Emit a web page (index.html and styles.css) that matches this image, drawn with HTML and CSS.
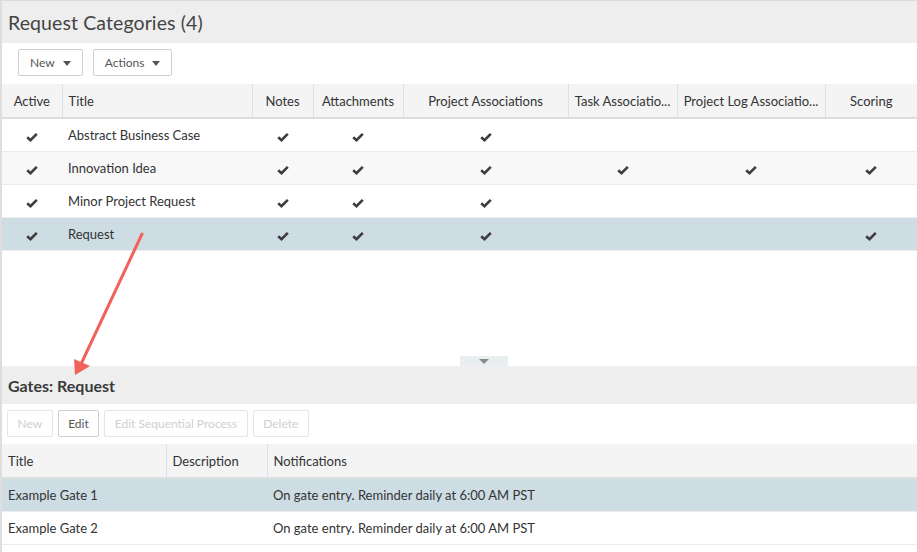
FILE: index.html
```html
<!DOCTYPE html>
<html>
<head>
<meta charset="utf-8">
<link rel="stylesheet" href="styles.css">
</head>
<body>
<div class="page">
  <section class="panel top">
    <div class="band"><h1 class="title">Request Categories (4)</h1></div>
    <div class="toolbar">
      <button class="btn drop">New <span class="caret"></span></button>
      <button class="btn drop">Actions <span class="caret"></span></button>
    </div>
    <table class="grid">
      <colgroup>
        <col style="width:60px"><col style="width:190px"><col style="width:61px"><col style="width:90px">
        <col style="width:165px"><col style="width:109px"><col style="width:148px"><col style="width:92px">
      </colgroup>
      <thead>
        <tr>
          <th class="c">Active</th><th>Title</th><th class="c">Notes</th><th class="c">Attachments</th>
          <th class="c">Project Associations</th><th class="c">Task Associatio...</th><th class="c">Project Log Associatio...</th><th class="c">Scoring</th>
        </tr>
      </thead>
      <tbody>
        <tr>
          <td class="c"><svg class="ck" viewBox="0 0 12 10"><path d="M1.2 5.2 4.5 8.2 10.8 1.8"/></svg></td>
          <td>Abstract Business Case</td>
          <td class="c"><svg class="ck" viewBox="0 0 12 10"><path d="M1.2 5.2 4.5 8.2 10.8 1.8"/></svg></td>
          <td class="c"><svg class="ck" viewBox="0 0 12 10"><path d="M1.2 5.2 4.5 8.2 10.8 1.8"/></svg></td>
          <td class="c"><svg class="ck" viewBox="0 0 12 10"><path d="M1.2 5.2 4.5 8.2 10.8 1.8"/></svg></td>
          <td></td><td></td><td></td>
        </tr>
        <tr class="alt">
          <td class="c"><svg class="ck" viewBox="0 0 12 10"><path d="M1.2 5.2 4.5 8.2 10.8 1.8"/></svg></td>
          <td>Innovation Idea</td>
          <td class="c"><svg class="ck" viewBox="0 0 12 10"><path d="M1.2 5.2 4.5 8.2 10.8 1.8"/></svg></td>
          <td class="c"><svg class="ck" viewBox="0 0 12 10"><path d="M1.2 5.2 4.5 8.2 10.8 1.8"/></svg></td>
          <td class="c"><svg class="ck" viewBox="0 0 12 10"><path d="M1.2 5.2 4.5 8.2 10.8 1.8"/></svg></td>
          <td class="c"><svg class="ck" viewBox="0 0 12 10"><path d="M1.2 5.2 4.5 8.2 10.8 1.8"/></svg></td>
          <td class="c"><svg class="ck" viewBox="0 0 12 10"><path d="M1.2 5.2 4.5 8.2 10.8 1.8"/></svg></td>
          <td class="c"><svg class="ck" viewBox="0 0 12 10"><path d="M1.2 5.2 4.5 8.2 10.8 1.8"/></svg></td>
        </tr>
        <tr>
          <td class="c"><svg class="ck" viewBox="0 0 12 10"><path d="M1.2 5.2 4.5 8.2 10.8 1.8"/></svg></td>
          <td>Minor Project Request</td>
          <td class="c"><svg class="ck" viewBox="0 0 12 10"><path d="M1.2 5.2 4.5 8.2 10.8 1.8"/></svg></td>
          <td class="c"><svg class="ck" viewBox="0 0 12 10"><path d="M1.2 5.2 4.5 8.2 10.8 1.8"/></svg></td>
          <td class="c"><svg class="ck" viewBox="0 0 12 10"><path d="M1.2 5.2 4.5 8.2 10.8 1.8"/></svg></td>
          <td></td><td></td><td></td>
        </tr>
        <tr class="sel">
          <td class="c"><svg class="ck" viewBox="0 0 12 10"><path d="M1.2 5.2 4.5 8.2 10.8 1.8"/></svg></td>
          <td>Request</td>
          <td class="c"><svg class="ck" viewBox="0 0 12 10"><path d="M1.2 5.2 4.5 8.2 10.8 1.8"/></svg></td>
          <td class="c"><svg class="ck" viewBox="0 0 12 10"><path d="M1.2 5.2 4.5 8.2 10.8 1.8"/></svg></td>
          <td class="c"><svg class="ck" viewBox="0 0 12 10"><path d="M1.2 5.2 4.5 8.2 10.8 1.8"/></svg></td>
          <td></td><td></td>
          <td class="c"><svg class="ck" viewBox="0 0 12 10"><path d="M1.2 5.2 4.5 8.2 10.8 1.8"/></svg></td>
        </tr>
      </tbody>
    </table>
    <div class="splitter"><span class="tri"></span></div>
  </section>

  <section class="panel bottom">
    <div class="band small"><h2 class="subtitle">Gates: Request</h2></div>
    <div class="toolbar tb2">
      <button class="btn off">New</button>
      <button class="btn">Edit</button>
      <button class="btn off">Edit Sequential Process</button>
      <button class="btn off">Delete</button>
    </div>
    <table class="grid">
      <colgroup><col style="width:164px"><col style="width:101px"><col></colgroup>
      <thead>
        <tr><th>Title</th><th>Description</th><th>Notifications</th></tr>
      </thead>
      <tbody>
        <tr class="sel"><td>Example Gate 1</td><td></td><td>On gate entry. Reminder daily at 6:00 AM PST</td></tr>
        <tr><td>Example Gate 2</td><td></td><td>On gate entry. Reminder daily at 6:00 AM PST</td></tr>
      </tbody>
    </table>
  </section>

  <svg class="arrow" viewBox="0 0 917 552" width="917" height="552">
    <line x1="142" y1="234" x2="82" y2="362" />
    <polygon points="75,375 74,359 90,366" />
  </svg>
</div>
</body>
</html>
```

FILE: styles.css
```css
* { box-sizing: border-box; }
html, body { margin: 0; padding: 0; background: #fff; }
body {
  font-family: "Lato", "Open Sans", sans-serif;
  color: #333;
  width: 917px;
  height: 552px;
  overflow: hidden;
}
.page {
  position: relative;
  width: 917px;
  height: 552px;
  border-left: 2px solid #dedede;
  border-top: 1px solid #dcdcdc;
}
.panel.top {
  height: 366px;
  display: flex;
  flex-direction: column;
  border-bottom: 1px dotted #e2e2e2;
}
.band {
  background: #eeeeee;
  height: 42px;
  display: flex;
  align-items: center;
  padding-left: 6px;
}
.band.small { height: 37px; }
.title {
  margin: 0;
  font-size: 19.5px;
  font-weight: 400;
  color: #444;
  letter-spacing: 0.1px;
}
.subtitle {
  margin: 0;
  font-size: 16px;
  font-weight: 700;
  color: #3a3a3a;
}
.toolbar {
  height: 41px;
  display: flex;
  align-items: flex-start;
  gap: 10px;
  padding: 6px 0 0 16px;
}
.toolbar.tb2 {
  height: 40px;
  gap: 5px;
  padding-left: 5px;
}
.btn {
  height: 27px;
  font-family: inherit;
  font-size: 12px;
  color: #555;
  background: #fff;
  border: 1px solid #cfcfcf;
  border-radius: 2px;
  padding: 0 9.5px;
  display: inline-flex;
  align-items: center;
  gap: 8px;
}
.btn.drop { padding: 0 11px 0 11px; }
.btn.off { color: #cfcfcf; border-color: #e6e6e6; }
.caret {
  width: 0; height: 0;
  border-left: 4.5px solid transparent;
  border-right: 4.5px solid transparent;
  border-top: 5px solid #555;
  margin-top: 1px;
}
.grid {
  width: 915px;
  border-collapse: collapse;
  table-layout: fixed;
  font-size: 13px;
}
.grid th {
  height: 34px;
  font-weight: 400;
  text-align: left;
  padding: 0 6px;
  color: #333;
  background: #f4f4f4;
  border-left: 1px solid #d6e2e8;
  border-bottom: 2px solid #dddddd;
  white-space: nowrap;
  overflow: hidden;
}
.grid th:first-child { border-left: none; }
.grid td {
  height: 33px;
  padding: 1px 6px 0;
  border-bottom: 1px solid #ececec;
  white-space: nowrap;
  overflow: hidden;
  color: #333;
}
.grid .c { text-align: center; }
.grid tr.alt td { background: #f8f8f8; }
.grid tr.sel td { background: #cddde3; }
.ck {
  width: 12px;
  height: 10px;
  display: inline-block;
  vertical-align: middle;
}
.ck path {
  fill: none;
  stroke: #3d3d3d;
  stroke-width: 2.6;
  stroke-linecap: butt;
}
.splitter {
  margin-top: auto;
  margin-left: 458px;
  width: 48px;
  height: 10px;
  background: #e9eef0;
  display: flex;
  justify-content: center;
  align-items: flex-start;
  padding-top: 3px;
}
.tri {
  width: 0; height: 0;
  border-left: 5px solid transparent;
  border-right: 5px solid transparent;
  border-top: 5px solid #8a8a8a;
}
.arrow {
  position: absolute;
  left: -2px;
  top: -1px;
  pointer-events: none;
}
.arrow line { stroke: #f0625a; stroke-width: 3; stroke-linecap: round; }
.arrow polygon { fill: #f0625a; }
```
